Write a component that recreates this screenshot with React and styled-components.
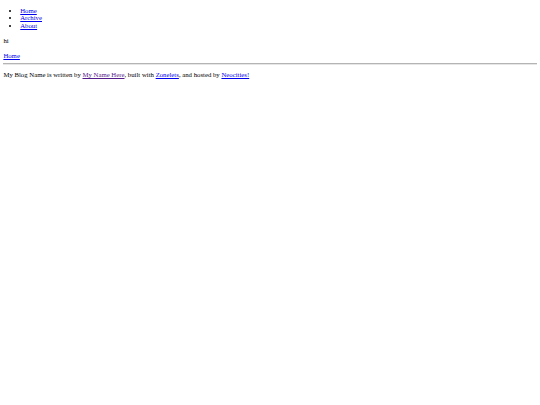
import React from "react";
import styled, { createGlobalStyle } from "styled-components";

// the page is shown at about 0.42 of its real size (1280 -> 540)
const GlobalStyle = createGlobalStyle`
  body {
    margin: 0;
    padding: 0 3.375px;
    font-family: "Liberation Serif", "Times New Roman", serif;
    font-size: 6.75px;
    line-height: 7.5px;
    color: #000;
    background: #fff;
  }
`;

const NavList = styled.ul`
  margin: 6.6px 0 8.4px;
  padding-left: 16.875px;
  list-style: disc;
`;

const Link = styled.a`
  color: ${(p) => (p.$visited ? "#551a8b" : "#0000ee")};
  text-decoration: underline;
`;

const Para = styled.p`
  margin: 6.75px 0;
`;

const BackNav = styled.div`
  margin: 0;
`;

const Rule = styled.hr`
  margin: 3.375px 0;
  border: none;
  border-top: 1px solid #b4b4b4;
  border-bottom: 1px solid #e6e6e6;
  height: 0;
`;

const App = () => {
  return (
    <>
      <GlobalStyle />
      <header>
        <nav>
          <NavList>
            <li><Link href="#">Home</Link></li>
            <li><Link href="#">Archive</Link></li>
            <li><Link href="#">About</Link></li>
          </NavList>
        </nav>
      </header>
      <main>
        <Para>hi</Para>
        <BackNav><Link href="#">Home</Link></BackNav>
      </main>
      <Rule />
      <footer>
        <Para>
          My Blog Name is written by <Link $visited href="#">My Name Here</Link>, built with{" "}
          <Link href="#">Zonelets</Link>, and hosted by <Link href="#">Neocities!</Link>
        </Para>
      </footer>
    </>
  );
};

export default App;
